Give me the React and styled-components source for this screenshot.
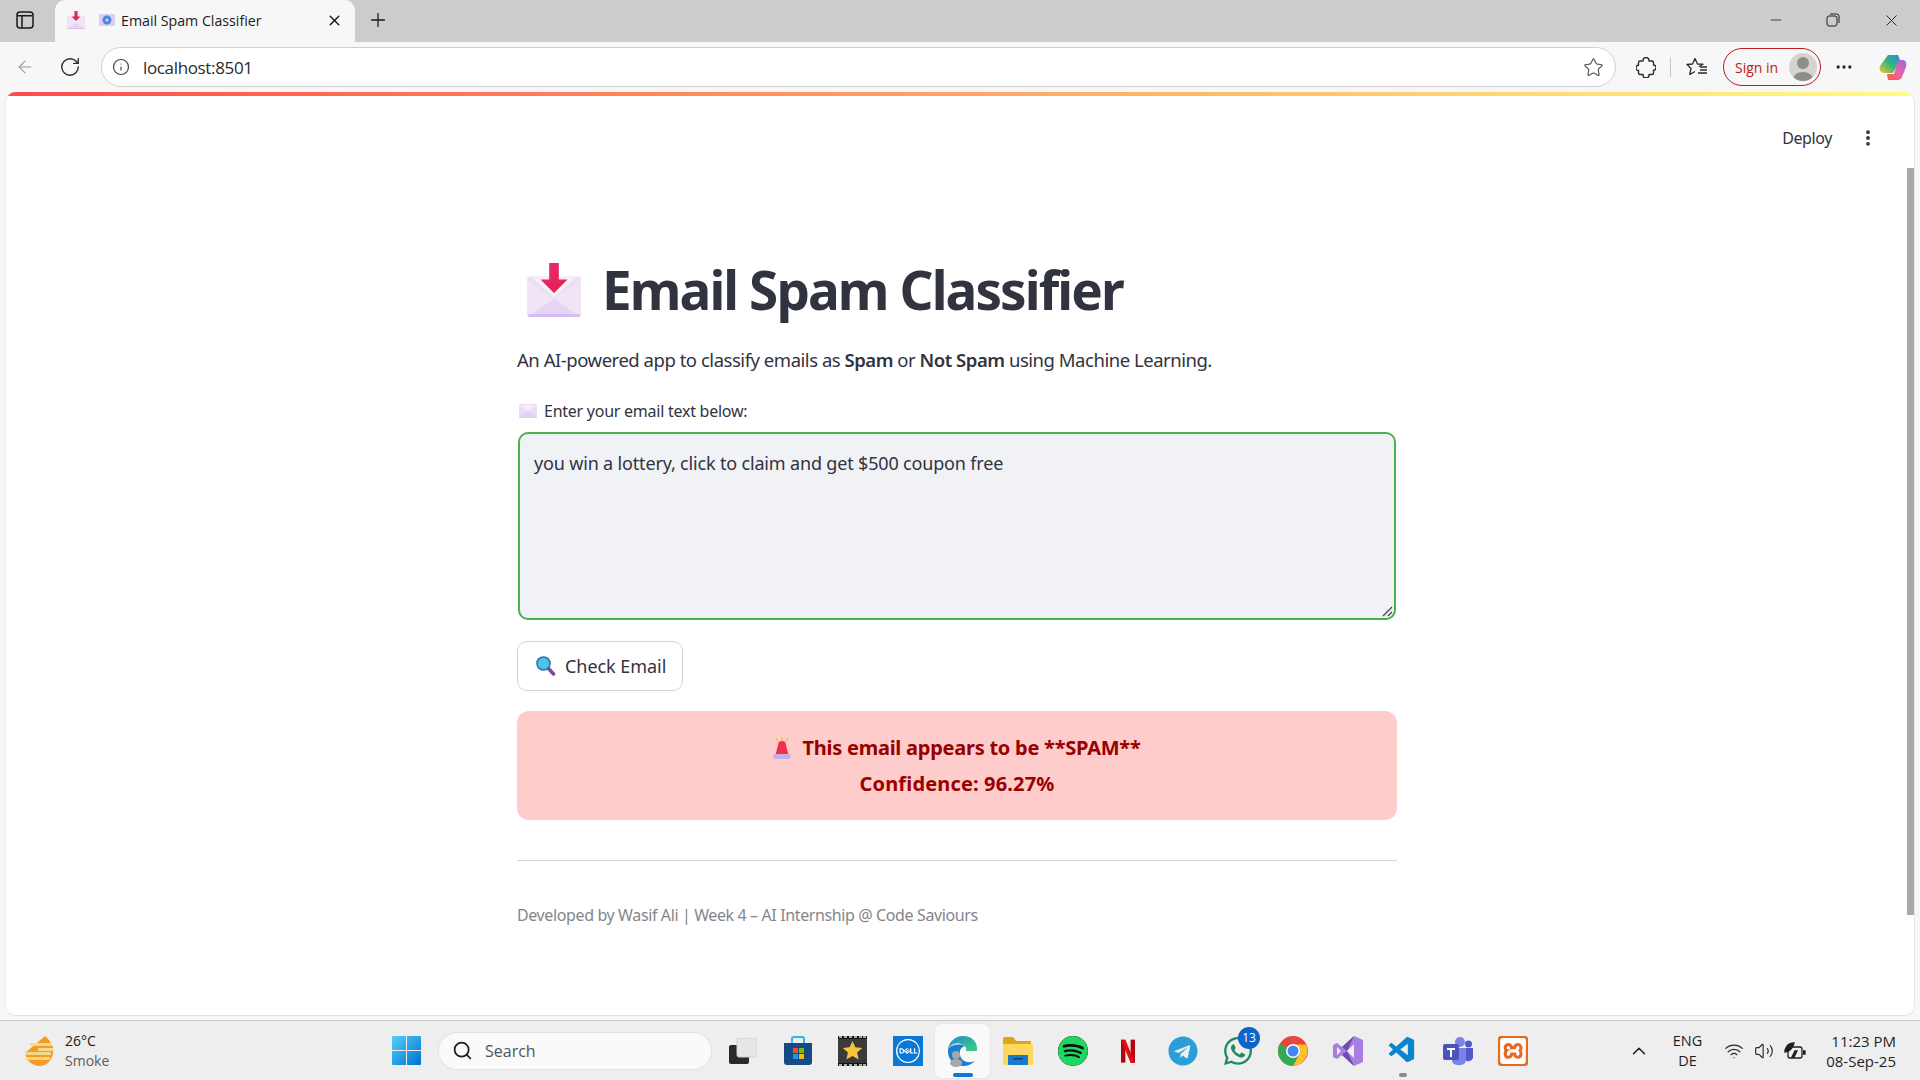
import React from "react";
import styled, { createGlobalStyle } from "styled-components";
import {
  ArrowLeft,
  RotateCw,
  Info,
  Star,
  Ellipsis,
  EllipsisVertical,
  X,
  Plus,
  Minus,
  Search,
  ChevronUp,
  Wifi,
  Volume2,
} from "lucide-react";
import { SiSpotify, SiXampp, SiDell } from "react-icons/si";
import { FaTelegram, FaWhatsapp } from "react-icons/fa";
import { VscVscode } from "react-icons/vsc";

const GlobalStyle = createGlobalStyle`
  html, body {
    margin: 0;
    padding: 0;
    height: 100%;
    overflow: hidden;
    background: #f7f7f7;
  }
  * { box-sizing: border-box; }
`;

const UI_FONT = `"Open Sans", "Noto Sans", sans-serif`;
const PAGE_FONT = `"Noto Sans", "Open Sans", sans-serif`;

const Screen = styled.div`
  width: 1920px;
  height: 1080px;
  display: flex;
  flex-direction: column;
  font-family: ${UI_FONT};
  background: #f7f7f7;
`;

/* browser chrome */
const TabStrip = styled.div`
  height: 42px;
  background: #cccccc;
  display: flex;
  align-items: center;
  flex: none;
`;
const PanelBtn = styled.div`
  width: 55px;
  padding-left: 16px;
  padding-bottom: 2px;
  display: flex;
`;
const Tab = styled.div`
  width: 300px;
  height: 42px;
  background: #f7f7f7;
  border-radius: 10px 10px 0 0;
  display: flex;
  align-items: center;
  padding: 0 12px 2px;
  font-size: 14.2px;
  color: #1a1a1a;
`;
const TabTitle = styled.span`
  margin-left: 6px;
  flex: 1;
`;
const NewTab = styled.div`
  margin-left: 12px;
  padding-bottom: 2px;
  display: flex;
`;
const WinControls = styled.div`
  margin-left: auto;
  display: flex;
  align-items: center;
  gap: 42px;
  padding-right: 19px;
  padding-bottom: 2px;
`;
const Toolbar = styled.div`
  height: 50px;
  flex: none;
  display: flex;
  align-items: center;
  padding-left: 15px;
`;
const ToolIcon = styled.div`
  display: flex;
  align-items: center;
  justify-content: center;
  width: ${(p) => p.$w || 20}px;
  margin-left: ${(p) => p.$ml || 0}px;
  color: ${(p) => p.$color || "#2b2b2b"};
`;
const Omnibox = styled.div`
  margin-left: 19px;
  width: 1515px;
  height: 40px;
  flex: none;
  background: #fff;
  border: 1px solid #cfcfcf;
  border-radius: 20px;
  display: flex;
  align-items: center;
  padding: 0 11px 0 10px;
  font-size: 17px;
  color: #2b2b2b;
`;
const Address = styled.span`
  margin-left: 13px;
  flex: 1;
  letter-spacing: -0.35px;
`;
const Divider = styled.div`
  width: 1px;
  height: 20px;
  background: #c8c8c8;
  margin-left: 13px;
`;
const SignIn = styled.div`
  margin-left: 15px;
  width: 98px;
  height: 38px;
  border: 1.5px solid #b81c1c;
  border-radius: 19px;
  display: flex;
  align-items: center;
  justify-content: space-between;
  padding: 0 3px 0 11px;
  font-size: 14px;
  color: #b81c1c;
`;
const Avatar = styled.div`
  width: 28px;
  height: 28px;
  border-radius: 50%;
  background: #d4d3cf;
  overflow: hidden;
  display: flex;
`;

/* page */
const PageArea = styled.div`
  flex: 1;
  padding: 0 5px 4px;
  display: flex;
  min-height: 0;
`;
const Page = styled.div`
  position: relative;
  flex: 1;
  background: #fff;
  border-radius: 10px;
  border-right: 1px solid #e6e6e6;
  border-bottom: 1px solid #e0e0e0;
  border-left: 1px solid #ececec;
  overflow: hidden;
  padding-right: 6px;
  font-family: ${PAGE_FONT};
  color: #31333f;
`;
const Decoration = styled.div`
  position: absolute;
  top: 0;
  left: 0;
  right: 0;
  height: 4px;
  background: linear-gradient(90deg, #ff4b4b, #fffd80);
`;
const AppHeader = styled.div`
  position: absolute;
  top: 35px;
  right: 36px;
  display: flex;
  align-items: center;
  gap: 26px;
  font-size: 16px;
  letter-spacing: -0.4px;
`;
const ScrollThumb = styled.div`
  position: absolute;
  top: 76px;
  right: 0;
  width: 7px;
  height: 747px;
  background: #a9a8ad;
`;
const Main = styled.main`
  width: 880px;
  margin: 0 auto;
  padding-top: 163px;
`;
const TitleRow = styled.div`
  display: flex;
  align-items: center;
  gap: 21px;
  padding-left: 10px;
  height: 70px;
`;
const Title = styled.h1`
  margin: 0;
  font-size: 53px;
  font-weight: 700;
  letter-spacing: -1.9px;
  line-height: 70px;
`;
const Lead = styled.p`
  margin: 20px 0 0;
  font-size: 18.5px;
  line-height: 30px;
  letter-spacing: -0.47px;
  b { font-weight: 600; }
`;
const FieldLabel = styled.label`
  margin-top: 24px;
  display: flex;
  align-items: center;
  gap: 7px;
  padding-left: 2px;
  height: 24px;
  font-size: 16px;
  letter-spacing: -0.25px;
`;
const EmailBox = styled.div`
  position: relative;
  margin: 9px 1px 0 1px;
  height: 188px;
  border: 2px solid #4caf50;
  border-radius: 10px;
  background: #f0f2f6;
  padding: 16px 14px;
  font-size: 18px;
  line-height: 26px;
  letter-spacing: -0.17px;
`;
const ResizeGrip = styled.svg`
  position: absolute;
  right: 1px;
  bottom: 1px;
`;
const CheckButton = styled.button`
  margin-top: 21px;
  width: 166px;
  height: 50px;
  border: 1px solid #d3d4d8;
  border-radius: 10px;
  background: #fff;
  display: flex;
  align-items: center;
  gap: 9px;
  padding: 0 0 0 18px;
  font-family: ${PAGE_FONT};
  font-size: 18px;
  letter-spacing: -0.05px;
  color: #31333f;
`;
const Alert = styled.div`
  margin-top: 20px;
  height: 109px;
  background: #ffcccc;
  border-radius: 12px;
  color: #990000;
  font-size: 20px;
  font-weight: 700;
  letter-spacing: -0.25px;
  display: flex;
  flex-direction: column;
  align-items: center;
  justify-content: center;
  gap: 7px;
  line-height: 29px;
`;
const AlertLine = styled.div`
  display: flex;
  align-items: center;
  gap: 11px;
`;
const Confidence = styled.div`
  letter-spacing: 0.15px;
`;
const Rule = styled.hr`
  margin: 40px 0 0;
  border: none;
  border-top: 1px solid #d6d6d8;
`;
const Footer = styled.p`
  margin: 42px 0 0;
  font-size: 16px;
  line-height: 24px;
  letter-spacing: -0.38px;
  color: #84858c;
`;

/* taskbar */
const Taskbar = styled.div`
  height: 60px;
  flex: none;
  background: #eeeeee;
  border-top: 1px solid #c6c6c6;
  display: flex;
  align-items: center;
  position: relative;
`;
const Weather = styled.div`
  width: 392px;
  flex: none;
  padding-left: 24px;
  display: flex;
  align-items: center;
  gap: 10px;
  font-size: 14px;
  line-height: 20px;
  color: #1a1a1a;
  small {
    display: block;
    font-size: 14px;
    color: #5c5c5c;
  }
`;
const SearchPill = styled.div`
  margin-left: 17px;
  width: 274px;
  height: 38px;
  flex: none;
  border-radius: 19px;
  background: #fafafa;
  border: 1px solid #e2e2e2;
  display: flex;
  align-items: center;
  gap: 12px;
  padding-left: 13px;
  font-size: 16px;
  color: #555;
`;
const AppSlot = styled.div`
  position: relative;
  width: 55px;
  height: 54px;
  flex: none;
  display: flex;
  align-items: center;
  justify-content: center;
  border-radius: 6px;
  ${(p) => p.$active && "background: #f9f9f9; box-shadow: 0 0 1px #bbb;"}
`;
const RunDot = styled.span`
  position: absolute;
  bottom: 1px;
  left: 50%;
  transform: translateX(-50%);
  height: 4px;
  border-radius: 2px;
  width: ${(p) => (p.$active ? 20 : 8)}px;
  background: ${(p) => (p.$active ? "#0a78d4" : "#8a8a8a")};
`;
const Badge = styled.span`
  position: absolute;
  top: 3px;
  right: 5px;
  width: 22px;
  height: 22px;
  border-radius: 50%;
  background: #0a66c8;
  color: #fff;
  font-size: 12px;
  display: flex;
  align-items: center;
  justify-content: center;
`;
const Tray = styled.div`
  margin-left: auto;
  display: flex;
  align-items: center;
  padding-right: 24px;
  color: #1f1f1f;
  font-size: 15px;
`;
const Lang = styled.div`
  margin-left: 23px;
  text-align: center;
  line-height: 20px;
  font-size: 14.5px;
`;
const Clock = styled.div`
  margin-left: 20px;
  text-align: right;
  line-height: 20px;
`;
const ColorTile = styled.div`
  width: 30px;
  height: 30px;
  border-radius: ${(p) => p.$radius || 0}px;
  background: ${(p) => p.$bg};
  display: flex;
  align-items: center;
  justify-content: center;
`;

/* drawings */
const MailDown = ({ size = 54 }) => (
  <svg width={size} height={size} viewBox="0 0 56 56">
    <defs>
      <linearGradient id="mdArrow" x1="0" y1="0" x2="1" y2="1">
        <stop offset="0" stopColor="#ee2f6e" />
        <stop offset="1" stopColor="#dc1f50" />
      </linearGradient>
    </defs>
    <rect x="0" y="14" width="56" height="42" rx="3" fill="#ecdff0" />
    <path d="M0 17 28 38 56 17V53a3 3 0 0 1-3 3H3a3 3 0 0 1-3-3Z" fill="#efe5f6" />
    <path d="M2 55 28 37l26 18Z" fill="#e5d4f4" />
    <path d="M4 14h48L28 36Z" fill="#f6eff8" />
    <rect x="1" y="53" width="54" height="3" rx="1.5" fill="#d6bdee" />
    <path d="M23 0h10v17h9L28 31 14 17h9Z" fill="url(#mdArrow)" />
  </svg>
);

const MiniMail = () => (
  <svg width="18" height="14" viewBox="0 0 18 14">
    <rect width="18" height="14" rx="1" fill="#e9dcf5" />
    <path d="M0 1 9 8l9-7" fill="#f3ebf8" />
    <path d="M0 14 9 7l9 7Z" fill="#e2cff3" />
  </svg>
);

const MiniFavicon = () => (
  <svg width="16" height="12" viewBox="0 0 16 12">
    <rect width="16" height="12" rx="1" fill="#d9cdf0" />
    <circle cx="8" cy="6" r="4.500" fill="#4f86e0" />
    <circle cx="8" cy="6" r="1.500" fill="#c6dcf7" />
  </svg>
);

const Lens = () => (
  <svg width="20" height="20" viewBox="0 0 20 20">
    <path d="M12 12l5.500 6" stroke="#7b4a94" strokeWidth="3.500" strokeLinecap="round" />
    <circle cx="7.500" cy="7.500" r="7.300" fill="#2c6fa8" />
    <circle cx="7.500" cy="7.500" r="5.800" fill="#4cc4ea" />
  </svg>
);

const Siren = () => (
  <svg width="18" height="22" viewBox="0 0 18 22">
    <path d="M9 0v4M3 1l2 4M15 1l-2 4" stroke="#f5b93a" strokeWidth="1.200" />
    <path d="M5 8a4 4 0 0 1 8 0l2.500 10h-13Z" fill="#f0304f" />
    <rect x="0.500" y="17" width="17" height="5" rx="1" fill="#c5b0e6" />
  </svg>
);

const PanelIcon = () => (
  <svg width="18" height="18" viewBox="0 0 18 18" fill="none">
    <rect x="1" y="1" width="16" height="16" rx="3" stroke="#1a1a1a" strokeWidth="1.500" />
    <path d="M1.500 4h15v1.500h-15Z" fill="#1a1a1a" />
    <path d="M6 4v13" stroke="#1a1a1a" strokeWidth="1.500" />
  </svg>
);

const RestoreIcon = () => (
  <svg width="14" height="14" viewBox="0 0 14 14" fill="none" stroke="#1f1f1f">
    <rect x="1" y="3" width="10" height="10" rx="2" />
    <path d="M4 1h7a2 2 0 0 1 2 2v7" />
  </svg>
);

const ExtensionIcon = () => (
  <svg width="20" height="21" viewBox="0 0 20 21" fill="none" stroke="#2b2b2b" strokeWidth="1.400" strokeLinejoin="round">
    <path d="M7 4V3.500a3 3 0 0 1 6 0V4h3a1.500 1.500 0 0 1 1.500 1.500V8a2.600 2.600 0 0 1 0 5.200V16a1.500 1.500 0 0 1-1.500 1.500h-3v.5a3 3 0 0 1-6 0v-.5H4A1.500 1.500 0 0 1 2.500 16v-2.500a2.600 2.600 0 0 1 0-5.200V5.500A1.500 1.500 0 0 1 4 4Z" />
  </svg>
);

const FavoritesIcon = () => (
  <svg width="22" height="20" viewBox="0 0 22 20" fill="none" stroke="#2b2b2b" strokeWidth="1.300" strokeLinejoin="round">
    <path d="M13 9.500 17 7.200 11.500 7 9 1.500 6.500 7 1 7.500l4 4-1.200 6L9 14.500" />
    <path d="M14 10h7M14 13h7M12 16h9" />
  </svg>
);

const CopilotIcon = () => (
  <svg width="28" height="26" viewBox="0 0 28 26">
    <defs>
      <linearGradient id="cpA" x1="0" y1="1" x2="1" y2="0">
        <stop offset="0" stopColor="#f4c430" />
        <stop offset="0.500" stopColor="#35b779" />
        <stop offset="1" stopColor="#1e8fe0" />
      </linearGradient>
      <linearGradient id="cpB" x1="0" y1="1" x2="1" y2="0">
        <stop offset="0" stopColor="#f7613a" />
        <stop offset="0.500" stopColor="#ee5fa7" />
        <stop offset="1" stopColor="#8f6be8" />
      </linearGradient>
    </defs>
    <path d="M9 1h10l2 5-7 13H5C1 19 0 15 1 12Z" fill="url(#cpA)" />
    <path d="M19 6h5c3 0 4 4 3 7l-4 10c-1 2-2 3-4 3H9l-1-6h7Z" fill="url(#cpB)" />
  </svg>
);

const AvatarGlyph = () => (
  <svg width="28" height="28" viewBox="0 0 28 28">
    <circle cx="14" cy="10" r="6" fill="#8f8d89" />
    <ellipse cx="14" cy="26" rx="10" ry="7" fill="#8f8d89" />
  </svg>
);

const WinLogo = () => (
  <svg width="29" height="29" viewBox="0 0 29 29">
    <defs>
      <linearGradient id="winG" x1="0" y1="0" x2="1" y2="1">
        <stop offset="0" stopColor="#52d0fb" />
        <stop offset="1" stopColor="#0070d0" />
      </linearGradient>
    </defs>
    <path d="M0 1a1 1 0 0 1 1-1h13v14H0ZM15 0h13a1 1 0 0 1 1 1v13H15ZM0 15h14v14H1a1 1 0 0 1-1-1ZM15 15h14v13a1 1 0 0 1-1 1H15Z" fill="url(#winG)" />
  </svg>
);

const WeatherIcon = () => (
  <svg width="31" height="30" viewBox="0 0 31 30">
    <path d="M21 0c7 6 9 12 8 17-1 8-7 13-13 13C8 30 2 24 1 17Z" fill="#f59a23" />
    <path d="M6 7h22v3H6ZM14 12h15v3H14ZM1 16h26v3H1ZM2 21h24v3H2Z" fill="#f5d98a" />
  </svg>
);

const TaskView = () => (
  <svg width="28" height="26" viewBox="0 0 28 26">
    <rect x="0" y="7" width="20" height="19" rx="2" fill="#2a2a2a" />
    <rect x="8" y="0" width="20" height="19" rx="2" fill="#e6e6e6" stroke="#cfcfcf" />
  </svg>
);

const StoreIcon = () => (
  <svg width="28" height="29" viewBox="0 0 28 29">
    <path d="M8 7V3a2 2 0 0 1 2-2h8a2 2 0 0 1 2 2v4" fill="none" stroke="#2fb4ee" strokeWidth="2" />
    <path d="M0 7h28v19a3 3 0 0 1-3 3H3a3 3 0 0 1-3-3Z" fill="#154a86" />
    <rect x="9" y="12" width="5" height="5" fill="#f25022" />
    <rect x="15" y="12" width="5" height="5" fill="#7fba00" />
    <rect x="9" y="18" width="5" height="5" fill="#00a4ef" />
    <rect x="15" y="18" width="5" height="5" fill="#ffb900" />
  </svg>
);

const MovieIcon = () => (
  <svg width="29" height="30" viewBox="0 0 29 30">
    <rect width="29" height="30" fill="#141414" />
    <rect y="3" width="29" height="24" fill="#3a3a3a" />
    <path d="M1 1h3M6 1h3M11 1h3M16 1h3M21 1h3M25 1h3M1 29h3M6 29h3M11 29h3M16 29h3M21 29h3M25 29h3" stroke="#ddd" strokeWidth="1.500" />
    <path d="M14.500 5l2.900 6.300 6.800.7-5.100 4.600 1.500 6.800-6.100-3.500-6.100 3.500 1.500-6.800-5.100-4.600 6.800-.7Z" fill="#f6c33c" />
  </svg>
);

const EdgeIcon = () => (
  <svg width="30" height="32" viewBox="0 0 30 32">
    <defs>
      <linearGradient id="edgeG" x1="0" y1="0" x2="1" y2="1">
        <stop offset="0" stopColor="#1c8fd6" />
        <stop offset="1" stopColor="#3ed07a" />
      </linearGradient>
    </defs>
    <path d="M15 1C7 1 1 7 0 14c3-5 9-7 13-5 4 1 6 4 5 7h11C30 7 24 1 15 1Z" fill="url(#edgeG)" />
    <path d="M0 14C-1 23 5 31 15 31c5 0 9-2 12-5-7 3-14 0-15-6-1-4 1-8 5-9-6-3-14-1-17 3Z" fill="#1a7fd0" />
    <circle cx="8" cy="20" r="4" fill="#a8a8a8" />
    <ellipse cx="8" cy="28" rx="6" ry="4" fill="#a8a8a8" />
  </svg>
);

const FolderIcon = () => (
  <svg width="30" height="28" viewBox="0 0 30 28">
    <path d="M0 2a2 2 0 0 1 2-2h8l3 4h15v6H0Z" fill="#e0a514" />
    <path d="M0 7h30v21H0Z" fill="#fdd75e" />
    <rect x="5" y="18" width="20" height="10" rx="1" fill="#1a78c9" />
    <rect x="10" y="21" width="10" height="1.500" fill="#0d3f73" />
  </svg>
);

const NetflixIcon = () => (
  <svg width="14" height="26" viewBox="0 0 16 26">
    <path d="M0 0h5v26l-5 .5Z" fill="#b1060f" />
    <path d="M11 0h5v26.500h-5Z" fill="#b1060f" />
    <path d="M0 0h5l11 26.500h-5Z" fill="#e50914" />
  </svg>
);

const ChromeIcon = () => (
  <svg width="30" height="30" viewBox="0 0 30 30">
    <circle cx="15" cy="15" r="15" fill="#e8453c" />
    <path d="M15 15 2 7.500A15 15 0 0 0 15 30l7.500-13Z" fill="#34a853" />
    <path d="M15 8.500h13A15 15 0 0 1 15 30l6.500-12Z" fill="#fbc02d" />
    <circle cx="15" cy="15" r="7" fill="#fff" />
    <circle cx="15" cy="15" r="5.500" fill="#4285f4" />
  </svg>
);

const VisualStudioIcon = () => (
  <svg width="30" height="30" viewBox="0 0 30 30">
    <path d="M21 0l9 4v22l-9 4-12-11-5 4-4-2V9l4-2 5 4Z" fill="#a77fe0" />
    <path d="M21 0 9 11l5 4ZM21 30 9 19l5-4Z" fill="#6e4bb0" />
    <path d="M21 8v14l-7-7Z" fill="#eeeeee" />
    <path d="M4 11v8l4-4Z" fill="#eeeeee" />
  </svg>
);

const TeamsIcon = () => (
  <svg width="30" height="28" viewBox="0 0 30 28">
    <circle cx="17" cy="5" r="5" fill="#7b83eb" />
    <circle cx="25.500" cy="7" r="3.500" fill="#5059c9" />
    <path d="M20 11h10v10a5 5 0 0 1-8 2Z" fill="#5059c9" />
    <path d="M9 11h14v12a5 5 0 0 1-5 5h-4a5 5 0 0 1-5-5Z" fill="#7b83eb" />
    <rect x="0" y="7" width="16" height="16" rx="2" fill="#4b53bc" />
    <path d="M4 11h8v2H9v7H7v-7H4Z" fill="#fff" />
  </svg>
);

const BatteryIcon = () => (
  <svg width="22" height="18" viewBox="0 0 22 18" fill="none" stroke="#1f1f1f" strokeWidth="1.300">
    <rect x="4" y="5" width="14" height="11" rx="2" />
    <path d="M19 9h2v3h-2" fill="#1f1f1f" />
    <path d="M1 8c2-6 6-7 9-7-1 4-3 8-9 9Z" fill="#1f1f1f" />
    <path d="M8 15l3-6h2l-3 6Z" fill="#1f1f1f" />
  </svg>
);

const apps = [
  { key: "store", icon: <StoreIcon /> },
  { key: "movie", icon: <MovieIcon /> },
  { key: "dell", icon: <ColorTile $bg="#0a78d4"><SiDell size={24} color="#fff" /></ColorTile> },
  { key: "edge", icon: <EdgeIcon />, active: true },
  { key: "folder", icon: <FolderIcon /> },
  { key: "spotify", icon: <SiSpotify size={30} color="#1ed760" style={{ background: "#111", borderRadius: "50%" }} /> },
  { key: "netflix", icon: <NetflixIcon /> },
  { key: "telegram", icon: <FaTelegram size={30} color="#2a9ed8" /> },
  { key: "whatsapp", icon: <FaWhatsapp size={32} color="#1f8a5b" />, badge: "13" },
  { key: "chrome", icon: <ChromeIcon /> },
  { key: "vs", icon: <VisualStudioIcon /> },
  { key: "vscode", icon: <VscVscode size={31} color="#0a84cf" />, running: true },
  { key: "teams", icon: <TeamsIcon /> },
  { key: "xampp", icon: <ColorTile $bg="#e8681f" $radius={3}><SiXampp size={26} color="#fff" /></ColorTile> },
];

const App = () => {
  return (
    <>
      <GlobalStyle />
      <Screen>
        <TabStrip>
          <PanelBtn>
            <PanelIcon />
          </PanelBtn>
          <Tab>
            <MailDown size={18} />
            <ToolIcon $w={16} $ml={14}>
              <MiniFavicon />
            </ToolIcon>
            <TabTitle>Email Spam Classifier</TabTitle>
            <X size={17} color="#1a1a1a" />
          </Tab>
          <NewTab>
            <Plus size={22} strokeWidth={1.4} color="#1a1a1a" />
          </NewTab>
          <WinControls>
            <Minus size={16} strokeWidth={1.2} color="#1f1f1f" />
            <RestoreIcon />
            <X size={19} strokeWidth={1.2} color="#1f1f1f" />
          </WinControls>
        </TabStrip>

        <Toolbar>
          <ToolIcon $w={20} $color="#9a9a9a">
            <ArrowLeft size={24} strokeWidth={1.3} />
          </ToolIcon>
          <ToolIcon $w={24} $ml={23}>
            <RotateCw size={22} strokeWidth={1.5} />
          </ToolIcon>
          <Omnibox>
            <Info size={18} strokeWidth={1.6} color="#444" />
            <Address>localhost:8501</Address>
            <Star size={21} strokeWidth={1.3} color="#555" />
          </Omnibox>
          <ToolIcon $w={22} $ml={19}>
            <ExtensionIcon />
          </ToolIcon>
          <Divider />
          <ToolIcon $w={22} $ml={15}>
            <FavoritesIcon />
          </ToolIcon>
          <SignIn>
            Sign in
            <Avatar>
              <AvatarGlyph />
            </Avatar>
          </SignIn>
          <ToolIcon $w={22} $ml={12}>
            <Ellipsis size={20} />
          </ToolIcon>
          <ToolIcon $w={28} $ml={24}>
            <CopilotIcon />
          </ToolIcon>
        </Toolbar>

        <PageArea>
          <Page>
            <Decoration />
            <AppHeader>
              <span>Deploy</span>
              <EllipsisVertical size={20} strokeWidth={2.6} />
            </AppHeader>
            <ScrollThumb />
            <Main>
              <TitleRow>
                <MailDown size={54} />
                <Title>Email Spam Classifier</Title>
              </TitleRow>
              <Lead>
                An AI-powered app to classify emails as <b>Spam</b> or <b>Not Spam</b> using Machine Learning.
              </Lead>
              <FieldLabel>
                <MiniMail />
                Enter your email text below:
              </FieldLabel>
              <EmailBox>
                you win a lottery, click to claim and get $500 coupon free
                <ResizeGrip width="12" height="12" viewBox="0 0 12 12">
                  <path d="M2 11 11 2M7 11l4-4" stroke="#444" strokeWidth="1.200" />
                </ResizeGrip>
              </EmailBox>
              <CheckButton>
                <Lens />
                Check Email
              </CheckButton>
              <Alert>
                <AlertLine>
                  <Siren />
                  This email appears to be **SPAM**
                </AlertLine>
                <Confidence>Confidence: 96.27%</Confidence>
              </Alert>
              <Rule />
              <Footer>Developed by Wasif Ali | Week 4 – AI Internship @ Code Saviours</Footer>
            </Main>
          </Page>
        </PageArea>

        <Taskbar>
          <Weather>
            <WeatherIcon />
            <div>
              26°C
              <small>Smoke</small>
            </div>
          </Weather>
          <WinLogo />
          <SearchPill>
            <Search size={21} strokeWidth={2} color="#1f1f1f" />
            Search
          </SearchPill>
          <ToolIcon $w={28} $ml={17}>
            <TaskView />
          </ToolIcon>
          <ToolIcon $w={13} />
          {apps.map((app) => (
            <AppSlot key={app.key} $active={app.active}>
              {app.icon}
              {app.badge && <Badge>{app.badge}</Badge>}
              {(app.active || app.running) && <RunDot $active={app.active} />}
            </AppSlot>
          ))}
          <Tray>
            <ChevronUp size={22} strokeWidth={1.7} />
            <Lang>
              ENG
              <br />
              DE
            </Lang>
            <ToolIcon $w={22} $ml={21}>
              <Wifi size={20} strokeWidth={1.5} />
            </ToolIcon>
            <ToolIcon $w={22} $ml={8}>
              <Volume2 size={20} strokeWidth={1.4} />
            </ToolIcon>
            <ToolIcon $w={22} $ml={9}>
              <BatteryIcon />
            </ToolIcon>
            <Clock>
              11:23 PM
              <br />
              08-Sep-25
            </Clock>
          </Tray>
        </Taskbar>
      </Screen>
    </>
  );
};

export default App;
